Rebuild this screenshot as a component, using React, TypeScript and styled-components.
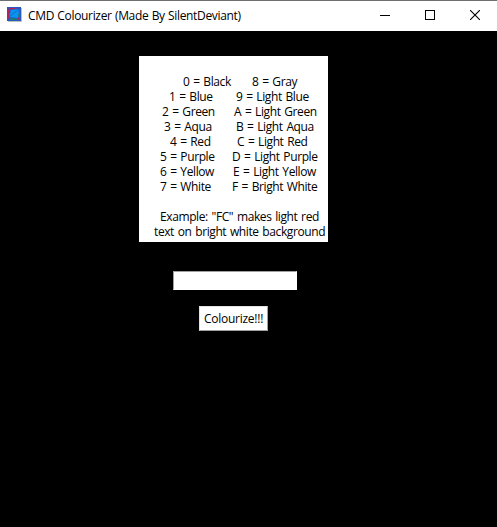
import React from "react";
import styled, { createGlobalStyle } from "styled-components";

const GlobalStyle = createGlobalStyle`
  * { box-sizing: border-box; }
  html, body { margin: 0; padding: 0; background: #000; overflow: hidden; }
`;

const Window = styled.main`
  display: flex;
  flex-direction: column;
  width: 497px;
  height: 527px;
  background: #000;
  color: #000;
  font: 12px/15px "Open Sans", "Noto Sans", sans-serif;
  letter-spacing: -0.4px;
`;

const TitleBar = styled.header`
  display: flex;
  align-items: center;
  height: 31px;
  flex: none;
  padding-left: 7px;
  border-top: 1px solid #6f6f6f;
  background: #fff;
`;

const Title = styled.h1`
  flex: 1;
  margin: -1px 0 0 7px;
  font-size: 12px;
  font-weight: 400;
  letter-spacing: -0.33px;
  word-spacing: 0.5px;
  white-space: nowrap;
`;

const CaptionButton = styled.button`
  display: flex;
  align-items: center;
  justify-content: center;
  align-self: flex-start;
  width: 45px;
  height: 28px;
  padding: 0;
  border: 0;
  background: transparent;
`;

const Content = styled.section`
  display: flex;
  flex-direction: column;
  align-items: flex-start;
`;

const Legend = styled.div`
  width: 189px;
  height: 186px;
  margin: 25px 0 0 139px;
  padding-top: 18px;
  background: #fff;
  white-space: nowrap;
  word-spacing: 1px;
`;

const Row = styled.div<{ $indent: number }>`
  display: flex;
  height: 15px;
  padding-left: ${(p) => p.$indent}px;
`;

const Entry = styled.span<{ $width?: number }>`
  flex: none;
  width: ${(p) => (p.$width ? `${p.$width}px` : "auto")};
`;

const Example = styled.div`
  padding-top: 15px;
`;

const CodeInput = styled.input`
  width: 124px;
  height: 19px;
  margin: 29px 0 0 173px;
  padding: 1px 3px;
  border: 1px solid #fff;
  border-top-color: #a0a0a0;
  border-left-color: #a0a0a0;
  border-radius: 0;
  outline: 0;
  background: #fff;
  font: inherit;
`;

const ColourizeButton = styled.button`
  width: 69px;
  height: 25px;
  margin: 16px 0 0 199px;
  padding: 0;
  border: 1px solid #a0a0a0;
  border-top-color: #e3e3e3;
  border-left-color: #e3e3e3;
  border-radius: 0;
  background: #fff;
  color: #000;
  font: inherit;
  letter-spacing: -0.25px;
`;

const IconSvg = styled.svg`
  flex: none;
  margin-top: -4px;
  filter: drop-shadow(1px 1px 0.5px rgba(0, 0, 0, 0.25));
`;

type Line = { indent: number; width: number; left: string; right: string };

const lines: Line[] = [
  { indent: 44, width: 69, left: "0 = Black", right: "8 = Gray" },
  { indent: 30, width: 67, left: "1 = Blue", right: "9 = Light Blue" },
  { indent: 23, width: 72, left: "2 = Green", right: "A = Light Green" },
  { indent: 25, width: 72, left: "3 = Aqua", right: "B = Light Aqua" },
  { indent: 31, width: 67, left: "4 = Red", right: "C = Light Red" },
  { indent: 21, width: 72, left: "5 = Purple", right: "D = Light Purple" },
  { indent: 21, width: 73, left: "6 = Yellow", right: "E = Light Yellow" },
  { indent: 21, width: 72, left: "7 = White", right: "F = Bright White" },
];

const AppIcon = () => (
  <IconSvg width="14" height="14" viewBox="0 0 14 14" aria-hidden="true">
    <rect width="14" height="14" fill="#2858c0" />
    <path d="M1 1h10L4 2.500z" fill="#c41d4c" />
    <path d="M1 2l2 2-1 7-1 1z" fill="#b4245c" />
    <path d="M13 2v9l-2-2z" fill="#128a60" />
    <path d="M3 11l7 1 2 1H4z" fill="#128a60" />
    <path d="M11 10l2 2-2 1z" fill="#b4245c" />
    <path d="M4 3l8-1-1 9-9-1z" fill="#0a94ee" />
    <path d="M12 2L2 10" stroke="#1560cc" strokeWidth=".8" fill="none" />
  </IconSvg>
);

export default function App() {
  return (
    <>
      <GlobalStyle />
      <Window>
        <TitleBar>
          <AppIcon />
          <Title>CMD Colourizer (Made By SilentDeviant)</Title>
          <CaptionButton aria-label="Minimize">
            <svg width="10" height="10" shapeRendering="crispEdges">
              <path d="M0 5h10v1H0z" />
            </svg>
          </CaptionButton>
          <CaptionButton aria-label="Maximize">
            <svg width="10" height="10" shapeRendering="crispEdges">
              <path d="M.5.5h9v9h-9z" fill="none" stroke="#000" />
            </svg>
          </CaptionButton>
          <CaptionButton aria-label="Close">
            <svg width="10" height="10">
              <path d="M0 0l10 10M10 0L0 10" stroke="#000" strokeWidth="1.1" />
            </svg>
          </CaptionButton>
        </TitleBar>
        <Content>
          <Legend>
            {lines.map((line) => (
              <Row key={line.left} $indent={line.indent}>
                <Entry $width={line.width}>{line.left}</Entry>
                <Entry>{line.right}</Entry>
              </Row>
            ))}
            <Example>
              <Row $indent={21}>
                <Entry>Example: "FC" makes light red</Entry>
              </Row>
              <Row $indent={15}>
                <Entry>text on bright white background</Entry>
              </Row>
            </Example>
          </Legend>
          <CodeInput aria-label="Colour code" />
          <ColourizeButton>Colourize!!!</ColourizeButton>
        </Content>
      </Window>
    </>
  );
}
